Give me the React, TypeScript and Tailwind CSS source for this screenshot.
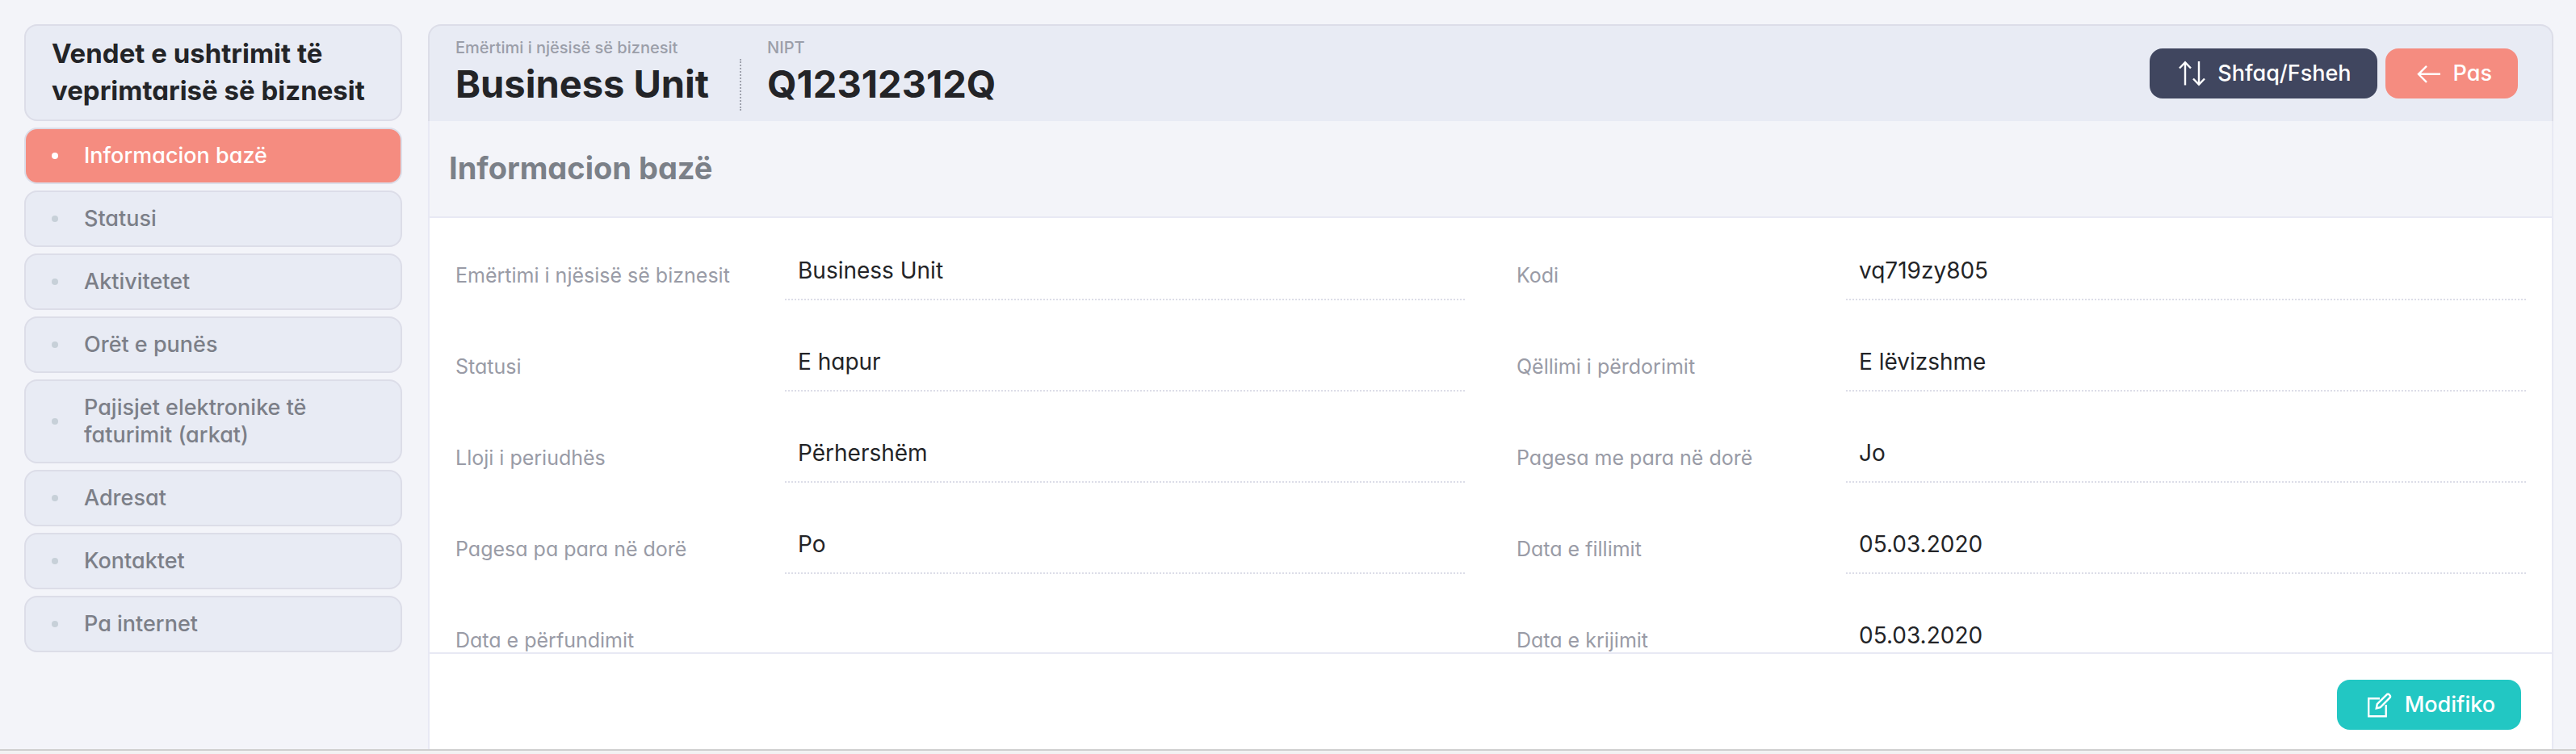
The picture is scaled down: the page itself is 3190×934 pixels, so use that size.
import type { ReactNode } from 'react';
import clsx from 'clsx';

const navItems = [
  'Informacion bazë',
  'Statusi',
  'Aktivitetet',
  'Orët e punës',
  'Pajisjet elektronike të faturimit (arkat)',
  'Adresat',
  'Kontaktet',
  'Pa internet',
];

const fields = [
  { id: 'name', label: 'Emërtimi i njësisë së biznesit', value: 'Business Unit' },
  { id: 'code', label: 'Kodi', value: 'vq719zy805' },
  { id: 'status', label: 'Statusi', value: 'E hapur' },
  { id: 'purpose', label: 'Qëllimi i përdorimit', value: 'E lëvizshme' },
  { id: 'period', label: 'Lloji i periudhës', value: 'Përhershëm' },
  { id: 'cash', label: 'Pagesa me para në dorë', value: 'Jo' },
  { id: 'cashless', label: 'Pagesa pa para në dorë', value: 'Po' },
  { id: 'start', label: 'Data e fillimit', value: '05.03.2020' },
  { id: 'end', label: 'Data e përfundimit', value: '' },
  { id: 'created', label: 'Data e krijimit', value: '05.03.2020' },
];

const Icon = ({ children }: { children: ReactNode }) => (
  <svg
    viewBox="0 0 32 32"
    className="size-8 shrink-0 overflow-visible"
    fill="none"
    stroke="currentColor"
    strokeWidth={2.4}
    aria-hidden="true"
  >
    {children}
  </svg>
);

const SortIcon = () => (
  <Icon>
    <path d="M8 30.5V2.5M1 9.5l7-7.3 7 7.3M25 1v28.5M18 22.5l7 7.3 7-7.3" />
  </Icon>
);

const BackIcon = () => (
  <Icon>
    <path d="M32 16.8H5M15 6.8l-10 10 10 10" />
  </Icon>
);

const EditIcon = () => (
  <Icon>
    <path d="M17 8.3H3.2V30.2H24.7V16" />
    <path d="M12.8 20.4l1-5.2L25.2 3.8a2.6 2.6 0 0 1 3.9 3.9L17.8 19.2z" />
  </Icon>
);

const Button = ({ className, children }: { className: string; children: ReactNode }) => (
  <button
    type="button"
    className={clsx(
      'flex items-center gap-4 rounded-2xl py-[14px] pr-8 pl-9 text-[27px] leading-[34px] font-medium text-white',
      className,
    )}
  >
    {children}
  </button>
);

const HeaderInfo = ({ label, value }: { label: string; value: string }) => (
  <div className="pb-[2px]">
    <p className="text-[20px] leading-7 font-medium text-[#9b9ea9]">{label}</p>
    <p className="text-[47px] leading-[62px] font-bold text-[#232427]">{value}</p>
  </div>
);

const Sidebar = () => (
  <aside className="w-[468px] shrink-0">
    <h2 className="rounded-2xl border-2 border-[#dcdde8] bg-[#e8ebf4] px-8 pt-[11px] pb-[13px] text-[33px] leading-[46px] font-bold text-[#232427]">
      Vendet e ushtrimit të veprimtarisë së biznesit
    </h2>
    <nav className="mt-2 flex flex-col gap-2">
      {navItems.map((item, i) => (
        <a
          key={item}
          href="#"
          className={clsx(
            'flex items-center gap-8 rounded-2xl border-2 border-[#dcdde8] px-8 py-4 text-[27px] leading-[34px] font-medium',
            i === 0 ? 'bg-[#f58c80] text-white' : 'bg-[#e8ebf4] text-[#7c7f88]',
          )}
        >
          <span className={clsx('size-2 shrink-0 rounded-full', i === 0 ? 'bg-white' : 'bg-[#c7d0d8]')} />
          <span>{item}</span>
        </a>
      ))}
    </nav>
  </aside>
);

const Header = () => (
  <header className="flex items-center justify-between rounded-t-2xl border-x-2 border-t-2 border-[#dcdde8] bg-[#e8ebf4] py-[13px] pr-[42px] pl-8">
    <div className="flex items-end">
      <HeaderInfo label="Emërtimi i njësisë së biznesit" value="Business Unit" />
      <div className="mr-8 ml-[38px] h-16 border-l-2 border-dotted border-[#a0a3ae]" />
      <HeaderInfo label="NIPT" value="Q12312312Q" />
    </div>
    <div className="flex gap-[10px]">
      <Button className="bg-[#40465f]">
        <SortIcon />
        Shfaq/Fsheh
      </Button>
      <Button className="bg-[#f58c80]">
        <BackIcon />
        Pas
      </Button>
    </div>
  </header>
);

export default function App() {
  return (
    <div className="flex h-screen flex-col bg-[#f3f4f9] font-['Inter',sans-serif] [font-feature-settings:'cv11']">
      <div className="flex min-h-0 flex-1 gap-8 pt-[30px] pr-7 pl-[30px]">
        <Sidebar />
        <main className="flex min-w-0 flex-1 flex-col">
          <Header />
          <section className="flex min-h-0 flex-1 flex-col border-x-2 border-[#e8e9f4] bg-white">
            <h1 className="border-b-2 border-[#e8e9f4] bg-[#f3f4f9] px-6 pt-[33px] pb-[35px] text-[38px] leading-[50px] font-bold text-[#7b8088]">
              Informacion bazë
            </h1>
            <form className="grid min-h-0 flex-1 grid-cols-2 content-start gap-y-[41px] overflow-hidden pt-[30px]">
              {fields.map((field) => (
                <div key={field.id} className="flex h-[72px] items-center px-8">
                  <label htmlFor={field.id} className="w-[408px] shrink-0 pt-[10px] text-[25px] leading-8 text-[#999ba6]">
                    {field.label}
                  </label>
                  <input
                    id={field.id}
                    readOnly
                    value={field.value}
                    className="h-full min-w-0 flex-1 border-b-2 border-dotted border-[#dcdde8] bg-transparent px-4 text-[28px] text-[#232427] outline-none"
                  />
                </div>
              ))}
            </form>
            <footer className="flex justify-end border-t-2 border-[#e8e9f4] pt-8 pr-[38px] pb-6">
              <Button className="bg-[#22c7c3]">
                <EditIcon />
                Modifiko
              </Button>
            </footer>
          </section>
        </main>
      </div>
      <div className="h-[6px] shrink-0 border-t-2 border-[#cfcfcf] bg-[#f2f2f2]" />
    </div>
  );
}
